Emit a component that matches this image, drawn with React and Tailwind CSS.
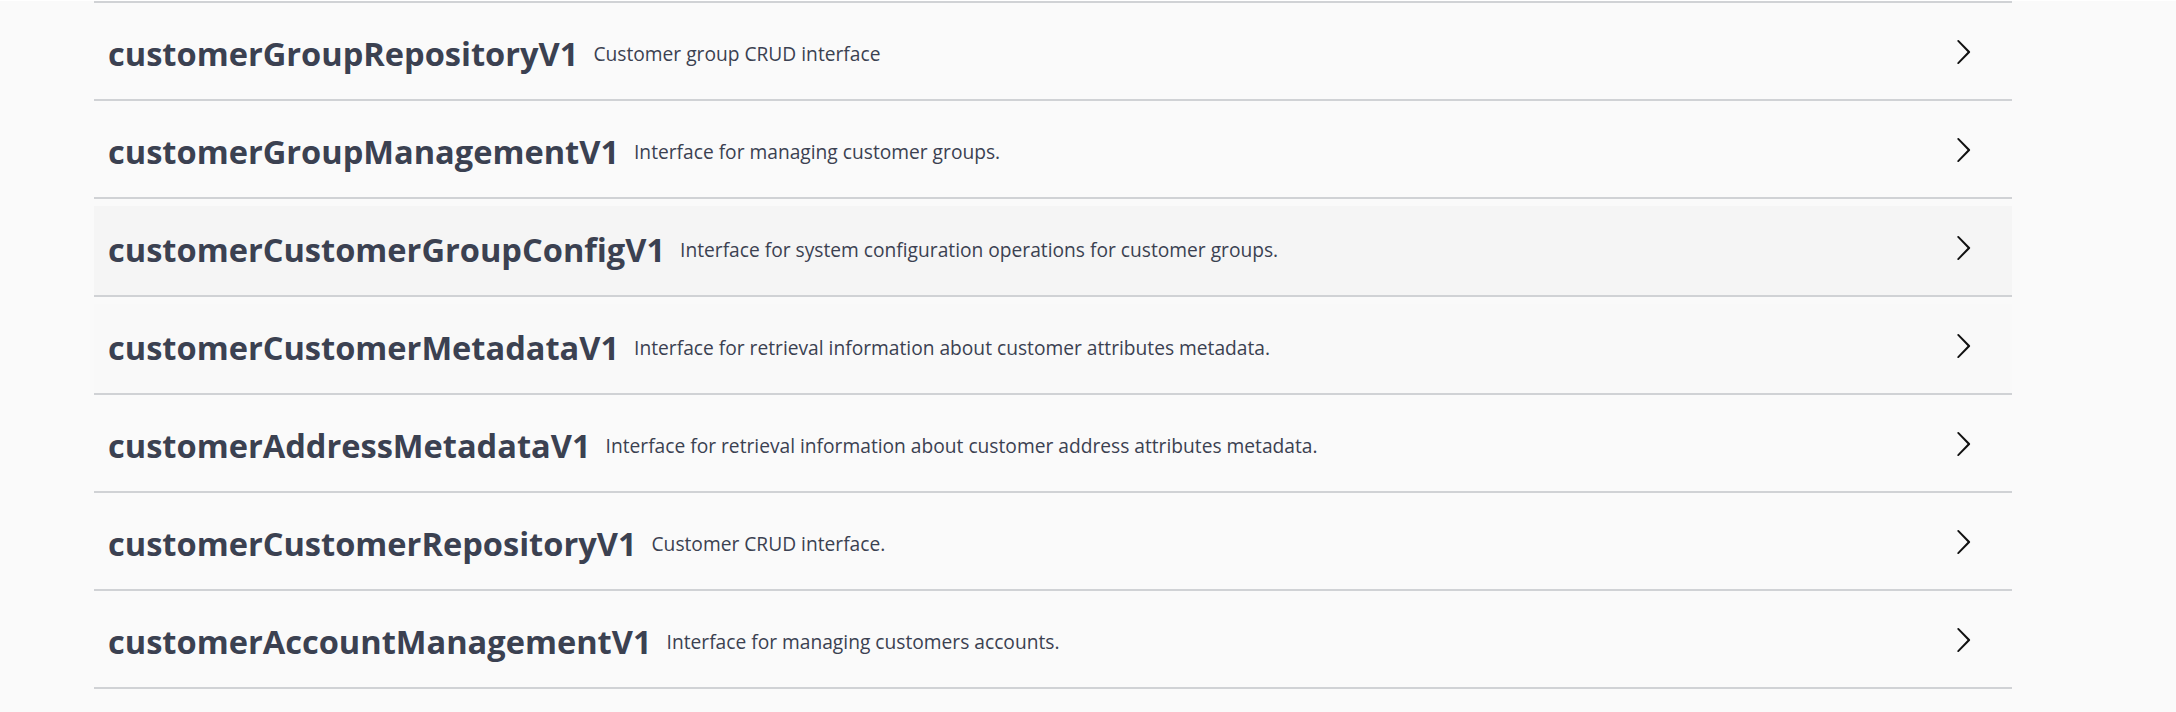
import React from "react";

const rows = [
  { name: "customerGroupRepositoryV1", desc: "Customer group CRUD interface", bg: "" },
  { name: "customerGroupManagementV1", desc: "Interface for managing customer groups.", bg: "" },
  { name: "customerCustomerGroupConfigV1", desc: "Interface for system configuration operations for customer groups.", bg: "bg-[#f5f5f5]" },
  { name: "customerCustomerMetadataV1", desc: "Interface for retrieval information about customer attributes metadata.", bg: "bg-[#f9f9f9]" },
  { name: "customerAddressMetadataV1", desc: "Interface for retrieval information about customer address attributes metadata.", bg: "" },
  { name: "customerCustomerRepositoryV1", desc: "Customer CRUD interface.", bg: "" },
  { name: "customerAccountManagementV1", desc: "Interface for managing customers accounts.", bg: "" },
];

function Arrow() {
  return (
    <svg width="28" height="28" viewBox="0 0 20 20" className="mb-[5px] shrink-0" fill="#111">
      <path d="M13.25 10L6.109 2.58a.697.697 0 0 1 0-.979.68.68 0 0 1 .969 0l7.83 7.908a.697.697 0 0 1 0 .979l-7.83 7.909a.68.68 0 0 1-.969 0 .697.697 0 0 1 0-.979L13.25 10z" />
    </svg>
  );
}

export default function App() {
  return (
    <div className="min-h-screen bg-[#fafafa] text-[#3b4151]" style={{ fontFamily: "'Open Sans', 'Noto Sans', sans-serif" }}>
      <div className="ml-[94px] w-[1918px]">
        <div className="mt-[1px] h-[2px] bg-[#d0d2d5]" />
        {rows.map((r) => (
          <div
            key={r.name}
            className={`mt-[7px] flex h-[91px] items-center border-b-2 border-[#d0d2d5] pl-[14px] pr-[35px] ${r.bg}`}
          >
            <span className="text-[32.6px] font-bold whitespace-nowrap">{r.name}</span>
            <span className="flex-1 px-[15px] text-[19.2px] whitespace-nowrap">{r.desc}</span>
            <Arrow />
          </div>
        ))}
      </div>
    </div>
  );
}
